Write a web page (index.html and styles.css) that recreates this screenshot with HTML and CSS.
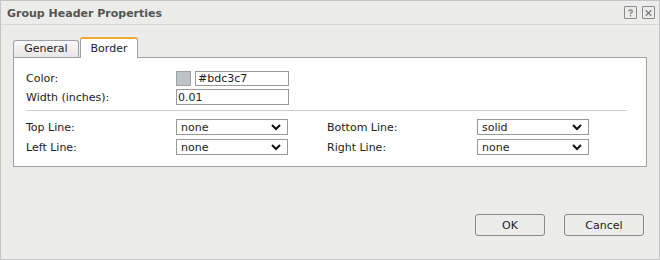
FILE: index.html
```html
<!DOCTYPE html>
<html>
  <head>
    <title>Group Header Properties</title>
    <meta charset="UTF-8">
    <link rel="stylesheet" href="styles.css">
  </head>
  <body>
    <div class="dialog">
      <div class="title-bar">
        <span class="title">Group Header Properties</span>
        <div class="title-icons">
          <span class="icon-btn">
            <svg width="12" height="12" viewBox="0 0 12 12">
              <path d="M4 4.2 Q4 2.5 6 2.5 Q8 2.5 8 4.2 Q8 5.3 6.6 5.9 Q6 6.2 6 7.3" fill="none" stroke="#777" stroke-width="1.4"/>
              <rect x="5.3" y="8.3" width="1.4" height="1.4" fill="#777"/>
            </svg>
          </span>
          <span class="icon-btn">
            <svg width="12" height="12" viewBox="0 0 12 12">
              <path d="M3 3 L9 9 M9 3 L3 9" stroke="#777" stroke-width="1.3"/>
            </svg>
          </span>
        </div>
      </div>
      <div class="content">
        <div class="tabs">
          <div class="tab">General</div>
          <div class="tab active">Border</div>
        </div>
        <div class="panel">
          <div class="row">
            <label class="label">Color:</label>
            <span class="swatch"></span>
            <input class="color-text" type="text" value="#bdc3c7">
          </div>
          <div class="row">
            <label class="label">Width (inches):</label>
            <input class="text-input" type="text" value="0.01">
          </div>
          <hr class="divider">
          <div class="lines">
            <label class="label">Top Line:</label>
            <select class="select"><option>none</option></select>
            <label class="label">Bottom Line:</label>
            <select class="select"><option>solid</option></select>
            <label class="label">Left Line:</label>
            <select class="select"><option>none</option></select>
            <label class="label">Right Line:</label>
            <select class="select"><option>none</option></select>
          </div>
        </div>
        <div class="buttons">
          <button class="btn">OK</button>
          <button class="btn">Cancel</button>
        </div>
      </div>
    </div>
  </body>
</html>
```

FILE: styles.css
```css
/* Dialog styles */
body {
  margin: 0;
  padding: 0;
  background-color: #fff;
  font-family: "DejaVu Sans", Verdana, sans-serif;
}

.dialog {
  width: 658px;
  height: 258px;
  border: 1px solid #c4c4c4;
  background-color: #ecedeb;
  color: #222;
}

.title-bar {
  height: 23px;
  border-bottom: 1px solid #d6d6d4;
  display: flex;
  align-items: center;
  justify-content: space-between;
  padding: 0 4px 0 6px;
}

.title {
  font-size: 11px;
  font-weight: bold;
  color: #555;
  padding-top: 1px;
}

.title-icons {
  display: flex;
  gap: 5px;
}

.icon-btn {
  width: 11px;
  height: 11px;
  border: 1px solid #8a8a8a;
  border-radius: 1px;
  display: flex;
  align-items: center;
  justify-content: center;
}

.content {
  padding: 12px 12px 0 12px;
}

.tabs {
  display: flex;
  align-items: flex-end;
  height: 20px;
}

.tab {
  font-size: 11px;
  height: 16px;
  line-height: 16px;
  padding: 0 10px;
  border: 1px solid #a0a0a0;
  border-bottom: none;
  border-radius: 3px 3px 0 0;
  background: linear-gradient(#fafafa, #e6e6e6);
  margin-right: 1px;
  width: 44px;
  text-align: center;
}

.tab.active {
  height: 19px;
  line-height: 19px;
  border-top: 2px solid #f0a830;
  background: #fff;
  position: relative;
  top: 1px;
  padding: 0 9px;
  width: 38px;
}

.panel {
  background-color: #fff;
  border: 1px solid #a0a0a0;
  height: 97px;
  padding: 11px 12px 0 12px;
  font-size: 11px;
}

.row {
  display: flex;
  align-items: center;
  height: 18px;
  margin-bottom: 1px;
}

.label {
  width: 150px;
  flex-shrink: 0;
}

.swatch {
  background-color: #bdc3c7;
  border: 1px solid #a0a0a0;
  margin-right: 4px;
  box-sizing: border-box;
  width: 15px;
  height: 15px;
}

input, select {
  font-family: inherit;
  font-size: 11px;
  color: #222;
}

.color-text {
  width: 94px;
  height: 15px;
  box-sizing: border-box;
  border: 1px solid #999;
  padding: 0 2px;
}

.text-input {
  width: 113px;
  height: 16px;
  box-sizing: border-box;
  border: 1px solid #999;
  padding: 0 1px;
}

.divider {
  border: none;
  border-top: 1px solid #c8cfd6;
  margin: 4px 7px 8px 0;
}

.lines {
  display: grid;
  grid-template-columns: 150px 112px 39px 150px 112px;
  row-gap: 4px;
  align-items: center;
}

.lines .label {
  width: auto;
}

.lines .label:nth-child(3),
.lines .label:nth-child(7) {
  grid-column: 4;
}

.select {
  height: 16px;
  box-sizing: border-box;
  border: 1px solid #999;
  background: #fff;
  padding: 0 0 0 4px;
  appearance: none;
  background-image: url("data:image/svg+xml;utf8,<svg xmlns='http://www.w3.org/2000/svg' width='10' height='7'><path d='M1 1 L5 5 L9 1' fill='none' stroke='%23111' stroke-width='2'/></svg>");
  background-repeat: no-repeat;
  background-position: right 6px center;
}

.buttons {
  display: flex;
  justify-content: flex-end;
  gap: 19px;
  margin-top: 47px;
  padding-right: 3px;
}

.btn {
  width: 70px;
  height: 22px;
  font-family: inherit;
  font-size: 11px;
  color: #222;
  background-color: #ecedeb;
  border: 1px solid #888;
  border-radius: 3px;
}

.btn + .btn {
  width: 80px;
}
```
